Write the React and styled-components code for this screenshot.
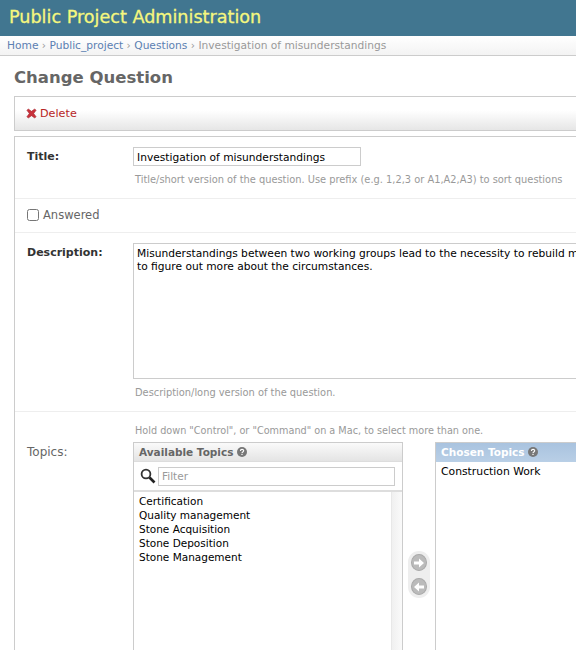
import React from 'react'
import styled, { createGlobalStyle } from 'styled-components'

const GlobalStyle = createGlobalStyle`
  html, body { margin: 0; padding: 0; background: #fff; overflow: hidden; }
  body { width: 576px; height: 650px; font-family: "DejaVu Sans", "Liberation Sans", sans-serif; }
  * { box-sizing: border-box; }
`

const available = ['Certification', 'Quality management', 'Stone Acquisition', 'Stone Deposition', 'Stone Management']

const Help = () => (
  <HelpIcon viewBox="0 0 10 10">
    <circle cx="5" cy="5" r="5" fill="currentColor" />
    <path d="M3.4 4c0-2.1 3.3-2.1 3.3-.2 0 1.2-1.7 1.2-1.7 2.3" fill="none" stroke="#fff" strokeWidth="1.1" />
    <rect x="4.4" y="6.8" width="1.2" height="1.2" fill="#fff" />
  </HelpIcon>
)

const App = () => {
  return (
    <Page>
      <GlobalStyle />
      <Header>Public Project Administration</Header>
      <Breadcrumbs>
        <a>Home</a> › <a>Public_project</a> › <a>Questions</a> › Investigation of misunderstandings
      </Breadcrumbs>
      <Content>
        <Heading>Change Question</Heading>
        <Toolbar>
          <svg width="11" height="11" viewBox="0 0 12 12">
            <path d="M2.5 1 6 3.6 9.5 1 11 2.5 8.4 6 11 9.5 9.5 11 6 8.4 2.5 11 1 9.5 3.6 6 1 2.5z" fill="#c8323c" stroke="#a52830" strokeWidth=".6" />
          </svg>
          <DeleteLink>Delete</DeleteLink>
        </Toolbar>
        <Fieldset>
          <Row>
            <FieldLine>
              <Label>Title:</Label>
              <FieldBody>
                <TitleInput readOnly value="Investigation of misunderstandings" />
                <HelpText>Title/short version of the question. Use prefix (e.g. 1,2,3 or A1,A2,A3) to sort questions</HelpText>
              </FieldBody>
            </FieldLine>
          </Row>
          <CheckRow>
            <Check type="checkbox" readOnly />
            <span>Answered</span>
          </CheckRow>
          <Row>
            <FieldLine>
              <Label>Description:</Label>
              <FieldBody>
                <TextArea
                  readOnly
                  wrap="off"
                  value={'Misunderstandings between two working groups lead to the necessity to rebuild most of the walls. We have\nto figure out more about the circumstances.'}
                />
                <HelpText>Description/long version of the question.</HelpText>
              </FieldBody>
            </FieldLine>
          </Row>
          <TopicsRow>
            <TopicsHint>Hold down "Control", or "Command" on a Mac, to select more than one.</TopicsHint>
            <FieldLine>
              <TopicsLabel>Topics:</TopicsLabel>
              <Selector>
                <Box>
                  <BoxTitle>Available Topics <Help /></BoxTitle>
                  <FilterRow>
                    <svg width="16" height="16" viewBox="0 0 16 16">
                      <circle cx="6" cy="6" r="4.4" fill="#fff" stroke="#333" strokeWidth="1.8" />
                      <path d="M9.5 9.5 14.5 14.5" stroke="#222" strokeWidth="2.6" />
                    </svg>
                    <FilterInput placeholder="Filter" readOnly />
                  </FilterRow>
                  <ListWrap>
                    <List>
                      {available.map((t) => <li key={t}>{t}</li>)}
                    </List>
                    <ScrollTrack />
                  </ListWrap>
                </Box>
                <Arrows>
                  <ArrowButton>
                    <svg width="12" height="12" viewBox="0 0 12 12"><path d="M1 4.500h5V1.500L11 6 6 10.500v-3H1z" fill="#fff" /></svg>
                  </ArrowButton>
                  <ArrowButton>
                    <svg width="12" height="12" viewBox="0 0 12 12"><path d="M11 4.500H6V1.500L1 6l5 4.500v-3h5z" fill="#fff" /></svg>
                  </ArrowButton>
                </Arrows>
                <ChosenBox>
                  <ChosenTitle>Chosen Topics <Help /></ChosenTitle>
                  <ChosenList>
                    <li>Construction Work</li>
                  </ChosenList>
                </ChosenBox>
              </Selector>
            </FieldLine>
          </TopicsRow>
        </Fieldset>
      </Content>
    </Page>
  )
}

export default App

const Page = styled.div`
  width: 576px;
  height: 650px;
  overflow: hidden;
  color: #333;
  font-size: 11px;
`
const Header = styled.div`
  height: 36px;
  background: #417690;
  color: #f5f77e;
  font-size: 17.6px;
  line-height: 35px;
  padding-left: 9px;
  width: 576px;
  -webkit-text-stroke: 0.3px #f5f77e;
`
const Breadcrumbs = styled.div`
  height: 20px;
  background: linear-gradient(#fff, #f3f3f3);
  border-bottom: 1px solid #ccc;
  color: #999;
  font-size: 10.65px;
  line-height: 19px;
  padding-left: 7px;
  white-space: nowrap;
  > a { color: #5b80b2; }
`
const Content = styled.div`
  padding: 0 0 0 14px;
  width: 800px;
`
const Heading = styled.h1`
  margin: 0;
  padding-top: 11px;
  height: 40px;
  font-size: 16.5px;
  line-height: 21px;
  font-weight: 700;
  color: #666;
`
const Toolbar = styled.div`
  height: 35px;
  border: 1px solid #ccc;
  background: linear-gradient(#fff 40%, #e6e6e6);
  display: flex;
  align-items: center;
  gap: 3px;
  padding-left: 11px;
`
const DeleteLink = styled.span`
  color: #b72525;
  font-size: 11.2px;
`
const Fieldset = styled.div`
  margin-top: 5px;
  border: 1px solid #ccc;
  border-bottom: 0;
`
const Row = styled.div`
  padding: 10px 12px 11px;
  border-bottom: 1px solid #eee;
`
const FieldLine = styled.div`
  display: flex;
`
const Label = styled.div`
  width: 106px;
  font-size: 11px;
  line-height: 20px;
  font-weight: 700;
  color: #333;
`
const FieldBody = styled.div`
  display: flex;
  flex-direction: column;
`
const TitleInput = styled.input`
  width: 228px;
  height: 19px;
  margin: 0;
  padding: 1px 3px 0;
  border: 1px solid #ccc;
  border-radius: 0;
  outline: none;
  font: 10.67px "DejaVu Sans", sans-serif;
  color: #000;
`
const HelpText = styled.div`
  margin: 7px 0 0 2px;
  font-size: 9.86px;
  line-height: 14px;
  color: #999;
  white-space: nowrap;
`
const CheckRow = styled.div`
  height: 34px;
  padding: 0 0 2px 12px;
  display: flex;
  align-items: center;
  gap: 4px;
  border-bottom: 1px solid #eee;
  font-size: 11.5px;
  color: #666;
`
const Check = styled.input`
  width: 12px;
  height: 12px;
  margin: 1px 0 0;
`
const TextArea = styled.textarea`
  display: block;
  width: 560px;
  height: 136px;
  margin: 0;
  padding: 3px 3px;
  border: 1px solid #ccc;
  border-radius: 0;
  outline: none;
  resize: none;
  overflow: hidden;
  font: 10.67px/13px "DejaVu Sans", sans-serif;
  color: #000;
`
const TopicsRow = styled.div`
  padding: 12px 12px 0;
`
const TopicsHint = styled.div`
  margin-left: 108px;
  height: 18px;
  font-size: 9.7px;
  line-height: 14px;
  color: #999;
  white-space: nowrap;
`
const TopicsLabel = styled.div`
  width: 106px;
  font-size: 12px;
  line-height: 21px;
  color: #666;
`
const Selector = styled.div`
  display: flex;
  align-items: stretch;
  height: 220px;
`
const Box = styled.div`
  width: 270px;
  border: 1px solid #ccc;
  border-bottom: 0;
  display: flex;
  flex-direction: column;
`
const BoxTitle = styled.div`
  height: 19px;
  background: linear-gradient(#fafafa, #e4e4e4);
  border-bottom: 1px solid #ddd;
  padding-left: 5px;
  font-size: 10.5px;
  font-weight: 700;
  line-height: 18px;
  color: #666;
  display: flex;
  align-items: center;
  gap: 4px;
`
const HelpIcon = styled.svg`
  width: 10px;
  height: 10px;
  color: #777;
`
const FilterRow = styled.div`
  height: 30px;
  padding: 0 7px 0 6px;
  border-bottom: 2px solid #ddd;
  display: flex;
  align-items: center;
  gap: 2px;
`
const FilterInput = styled.input`
  flex: 1;
  min-width: 0;
  height: 19px;
  margin: 0;
  padding: 0 3px;
  border: 1px solid #ccc;
  border-radius: 0;
  outline: none;
  font: 10.5px "DejaVu Sans", sans-serif;
  &::placeholder { color: #999; opacity: 1; }
`
const ListWrap = styled.div`
  flex: 1;
  display: flex;
  justify-content: space-between;
`
const List = styled.ul`
  list-style: none;
  margin: 0;
  padding: 2px 5px;
  font-size: 10.5px;
  line-height: 14px;
  color: #000;
`
const ChosenList = styled(List)`
  padding-top: 3px;
  font-size: 10.8px;
`
const ScrollTrack = styled.div`
  width: 11px;
  border-left: 1px solid #e8e8e8;
  background: linear-gradient(90deg, #f0f0f0, #fafafa);
`
const Arrows = styled.div`
  align-self: flex-start;
  width: 22px;
  height: 47px;
  margin: 109px 5px 0 5px;
  padding: 3px 0;
  background: #eee;
  border-radius: 11px;
  display: flex;
  flex-direction: column;
  align-items: center;
  gap: 7px;
`
const ArrowButton = styled.div`
  width: 16px;
  height: 17px;
  border-radius: 50%;
  background: #bbb;
  border: 1px solid #aaa;
  display: flex;
  align-items: center;
  justify-content: center;
`
const ChosenBox = styled.div`
  width: 270px;
  border-left: 1px solid #ccc;
  border-top: 1px solid #ccc;
`
const ChosenTitle = styled(BoxTitle)`
  background: linear-gradient(#a9c3df, #b9cfe6);
  border-bottom: 0;
  padding-bottom: 1px;
  color: #fff;
`
